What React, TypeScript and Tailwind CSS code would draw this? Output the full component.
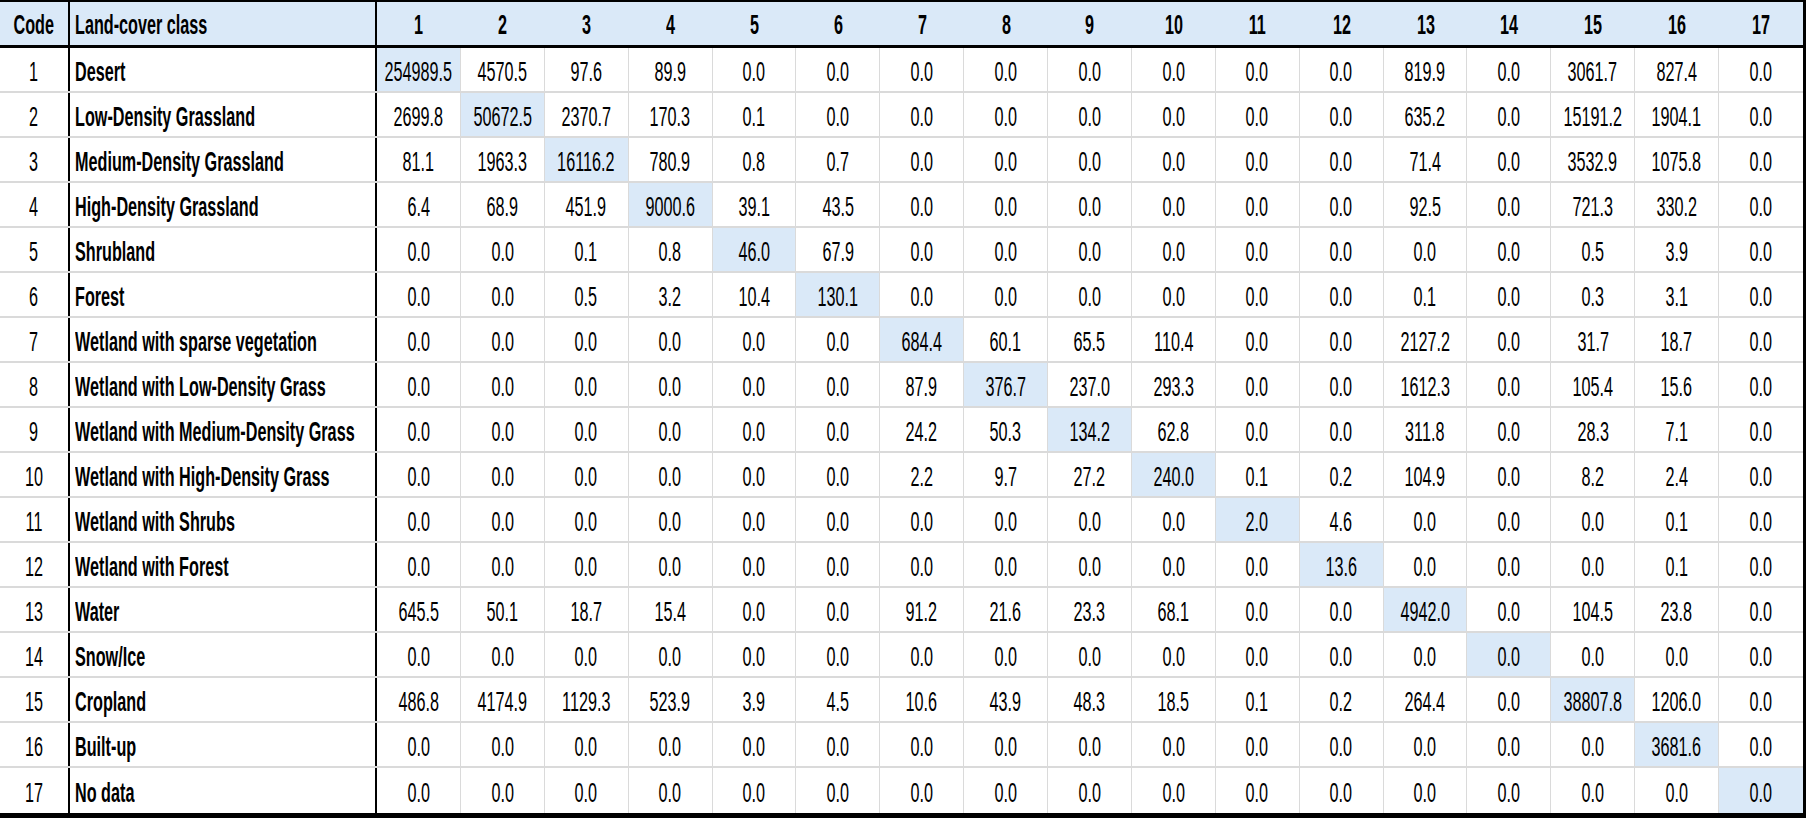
import React from 'react';

const font = { fontFamily: '"Liberation Sans", Arial, sans-serif' };

const rows: [string, string][] = [
  ['Desert', '254989.5 4570.5 97.6 89.9 0.0 0.0 0.0 0.0 0.0 0.0 0.0 0.0 819.9 0.0 3061.7 827.4 0.0'],
  ['Low-Density Grassland', '2699.8 50672.5 2370.7 170.3 0.1 0.0 0.0 0.0 0.0 0.0 0.0 0.0 635.2 0.0 15191.2 1904.1 0.0'],
  ['Medium-Density Grassland', '81.1 1963.3 16116.2 780.9 0.8 0.7 0.0 0.0 0.0 0.0 0.0 0.0 71.4 0.0 3532.9 1075.8 0.0'],
  ['High-Density Grassland', '6.4 68.9 451.9 9000.6 39.1 43.5 0.0 0.0 0.0 0.0 0.0 0.0 92.5 0.0 721.3 330.2 0.0'],
  ['Shrubland', '0.0 0.0 0.1 0.8 46.0 67.9 0.0 0.0 0.0 0.0 0.0 0.0 0.0 0.0 0.5 3.9 0.0'],
  ['Forest', '0.0 0.0 0.5 3.2 10.4 130.1 0.0 0.0 0.0 0.0 0.0 0.0 0.1 0.0 0.3 3.1 0.0'],
  ['Wetland with sparse vegetation', '0.0 0.0 0.0 0.0 0.0 0.0 684.4 60.1 65.5 110.4 0.0 0.0 2127.2 0.0 31.7 18.7 0.0'],
  ['Wetland with Low-Density Grass', '0.0 0.0 0.0 0.0 0.0 0.0 87.9 376.7 237.0 293.3 0.0 0.0 1612.3 0.0 105.4 15.6 0.0'],
  ['Wetland with Medium-Density Grass', '0.0 0.0 0.0 0.0 0.0 0.0 24.2 50.3 134.2 62.8 0.0 0.0 311.8 0.0 28.3 7.1 0.0'],
  ['Wetland with High-Density Grass', '0.0 0.0 0.0 0.0 0.0 0.0 2.2 9.7 27.2 240.0 0.1 0.2 104.9 0.0 8.2 2.4 0.0'],
  ['Wetland with Shrubs', '0.0 0.0 0.0 0.0 0.0 0.0 0.0 0.0 0.0 0.0 2.0 4.6 0.0 0.0 0.0 0.1 0.0'],
  ['Wetland with Forest', '0.0 0.0 0.0 0.0 0.0 0.0 0.0 0.0 0.0 0.0 0.0 13.6 0.0 0.0 0.0 0.1 0.0'],
  ['Water', '645.5 50.1 18.7 15.4 0.0 0.0 91.2 21.6 23.3 68.1 0.0 0.0 4942.0 0.0 104.5 23.8 0.0'],
  ['Snow/Ice', '0.0 0.0 0.0 0.0 0.0 0.0 0.0 0.0 0.0 0.0 0.0 0.0 0.0 0.0 0.0 0.0 0.0'],
  ['Cropland', '486.8 4174.9 1129.3 523.9 3.9 4.5 10.6 43.9 48.3 18.5 0.1 0.2 264.4 0.0 38807.8 1206.0 0.0'],
  ['Built-up', '0.0 0.0 0.0 0.0 0.0 0.0 0.0 0.0 0.0 0.0 0.0 0.0 0.0 0.0 0.0 3681.6 0.0'],
  ['No data', '0.0 0.0 0.0 0.0 0.0 0.0 0.0 0.0 0.0 0.0 0.0 0.0 0.0 0.0 0.0 0.0 0.0'],
];

const cols = Array.from({ length: 17 }, (_, i) => i + 1);

// narrow "Aptos Narrow"-like look: Arial-metric text squeezed horizontally
function Narrow({ children, left }: { children: React.ReactNode; left?: boolean }) {
  return (
    <span className={`inline-block whitespace-nowrap scale-x-[0.6] ${left ? 'origin-left' : ''}`}>{children}</span>
  );
}

const grid = 'grid grid-cols-[70px_307px_repeat(17,minmax(0,1fr))]';

export default function App() {
  return (
    <div
      style={font}
      className="w-[1806px] h-[818px] bg-white border-t-2 border-r-[3px] border-b-[5px] border-black text-black text-[27px] leading-none overflow-hidden"
    >
      {/* header */}
      <div className={`${grid} h-[46px] bg-[#dae9f8] border-b-[3px] border-black font-bold`}>
        <div className="border-r-2 border-black flex items-center justify-center pt-1">
          <Narrow>Code</Narrow>
        </div>
        <div className="border-r-2 border-black flex items-center pl-[5px] pt-1">
          <Narrow left>Land-cover class</Narrow>
        </div>
        {cols.map((c) => (
          <div key={c} className="flex items-center justify-center pt-1">
            <Narrow>{c}</Narrow>
          </div>
        ))}
      </div>

      {rows.map(([name, vals], r) => (
        <div key={name} className={`${grid} h-[45px] ${r < rows.length - 1 ? 'border-b-2 border-[#dadada]' : ''}`}>
          <div className="border-r-2 border-black flex items-center justify-center pt-[5px]">
            <Narrow>{r + 1}</Narrow>
          </div>
          <div className="border-r-2 border-black flex items-center pl-[5px] pt-[5px] font-bold">
            <Narrow left>{name}</Narrow>
          </div>
          {vals.split(' ').map((v, i) => (
            <div
              key={i}
              className={`flex items-center justify-center pt-[5px] ${i < 16 ? 'border-r border-[#dadada]' : ''} ${
                i === r ? 'bg-[#dae9f8]' : ''
              }`}
            >
              <Narrow>{v}</Narrow>
            </div>
          ))}
        </div>
      ))}
    </div>
  );
}
